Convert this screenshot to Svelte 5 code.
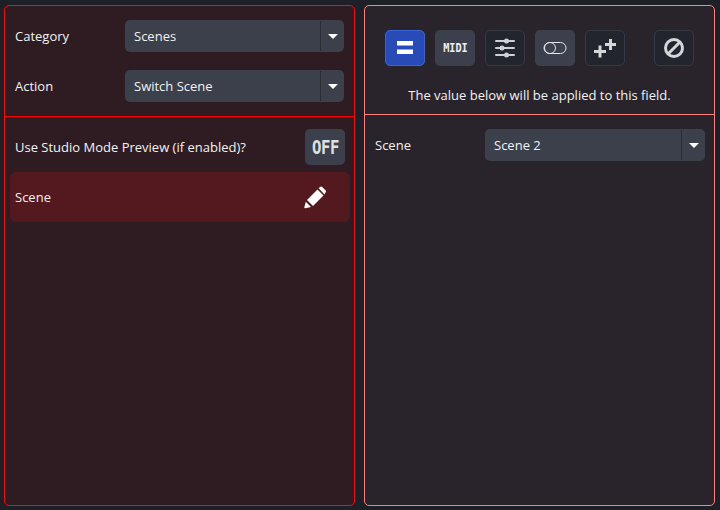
<script>
	let category = 'Scenes';
	let action = 'Switch Scene';
	let scene = 'Scene 2';
</script>

{#snippet dropdown(value)}
	<div class="dropdown">
		<span class="value">{value}</span>
		<span class="arrow"><i></i></span>
	</div>
{/snippet}

<div class="app">
	<section class="panel left">
		<div class="top">
			<div class="row">
				<span class="label">Category</span>
				{@render dropdown(category)}
			</div>
			<div class="row">
				<span class="label">Action</span>
				{@render dropdown(action)}
			</div>
		</div>
		<div class="fields">
			<div class="toggle-row">
				<span>Use Studio Mode Preview (if enabled)?</span>
				<button class="btn light off"><span>OFF</span></button>
			</div>
			<div class="scene-row">
				<span>Scene</span>
				<svg class="pencil" width="22" height="23" viewBox="0 0 22 23">
					<path fill="#fff" d="M13.500 3.500L19.500 9.500 9 20 3 14z" />
					<path fill="#fff" d="M14.700 2.300L16 1a1.600 1.600 0 0 1 2.200 0L21.500 4.300a1.600 1.600 0 0 1 0 2.200L20.500 8.500z" />
					<path fill="#fff" d="M1.800 15.800L7 21l-5.700 1.300a.9.9 0 0 1-1-1z" />
				</svg>
			</div>
		</div>
	</section>

	<section class="panel right">
		<div class="top-right">
			<div class="toolbar">
				<button class="btn blue" aria-label="Value">
					<svg width="18" height="14" viewBox="0 0 18 14"><path fill="#fff" d="M1 0h16v4.500H1zM1 8.500h16V13H1z" /></svg>
				</button>
				<button class="btn light midi"><span>MIDI</span></button>
				<button class="btn dark" aria-label="Sliders">
					<svg width="22" height="22" viewBox="0 0 22 22" fill="#cfd1d6">
						<rect x="1" y="3" width="20" height="2" rx="1" />
						<circle cx="12.500" cy="4" r="2.500" />
						<rect x="1" y="10" width="20" height="2" rx="1" />
						<circle cx="8" cy="11" r="2.500" />
						<rect x="1" y="17" width="20" height="2" rx="1" />
						<circle cx="12.500" cy="18" r="2.500" />
					</svg>
				</button>
				<button class="btn light" aria-label="Toggle">
					<svg width="24" height="14" viewBox="0 0 24 14" fill="none" stroke="#e4e5e8" stroke-width="1">
						<rect x="1" y="1.500" width="22" height="11" rx="5.500" />
						<circle cx="7" cy="7" r="5.500" />
					</svg>
				</button>
				<button class="btn dark" aria-label="Add">
					<svg width="26" height="24" viewBox="0 0 26 24" fill="#d4d6da">
						<path d="M6.500 9.500h3V14H14v3H9.500v4.500h-3V17H2v-3h4.500z" />
						<path d="M17 3h3v4h4v3h-4v4h-3v-4h-4V7h4z" />
					</svg>
				</button>
				<button class="btn dark ban" aria-label="None">
					<svg width="22" height="22" viewBox="0 0 22 22" fill="none" stroke="#d4d6da" stroke-width="3">
						<circle cx="11" cy="11" r="8.500" />
						<path d="M5 17L17 5" />
					</svg>
				</button>
			</div>
			<p class="hint">The value below will be applied to this field.</p>
		</div>
		<div class="fields">
			<div class="row">
				<span class="label">Scene</span>
				{@render dropdown(scene)}
			</div>
		</div>
	</section>
</div>

<style>
	:global(body) {
		background: #1d2027;
	}

	.app {
		display: flex;
		gap: 9px;
		box-sizing: border-box;
		width: 720px;
		height: 510px;
		padding: 5px 5px 4px 4px;
		font-family: "Open Sans", "Liberation Sans", sans-serif;
		font-size: 13px;
		color: #f2f2f2;
	}

	.panel {
		display: flex;
		flex-direction: column;
		flex: 1;
		box-sizing: border-box;
		border-radius: 5px;
	}

	.left {
		border: 1px solid #ee0f12;
		background: #2e1c22;
	}

	.right {
		border: 1px solid #ff8080;
		background: #29242b;
	}

	.top {
		display: flex;
		flex-direction: column;
		gap: 18px;
		padding: 14px 10px 14px 10px;
		border-bottom: 1px solid #ff0000;
	}

	.top-right {
		padding: 24px 0 10px;
		border-bottom: 1px solid #ff8080;
	}

	.row {
		display: flex;
		align-items: center;
		justify-content: space-between;
	}

	.label {
		width: 110px;
		flex-shrink: 0;
	}

	.dropdown {
		display: flex;
		flex: 1;
		height: 32px;
		border-radius: 5px;
		background: #3c404b;
	}

	.value {
		flex: 1;
		align-self: center;
		padding-left: 9px;
	}

	.arrow {
		display: flex;
		align-items: center;
		justify-content: center;
		width: 23px;
		margin: 1px 0;
		border-left: 1px solid #2a2c34;
	}

	.arrow i {
		width: 0;
		height: 0;
		border-left: 5px solid transparent;
		border-right: 5px solid transparent;
		border-top: 5px solid #fff;
	}

	.fields {
		display: flex;
		flex-direction: column;
		padding: 14px 9px 0 10px;
	}

	.left .fields {
		gap: 7px;
		padding: 12px 4px 0 5px;
	}

	.toggle-row {
		display: flex;
		align-items: center;
		justify-content: space-between;
		padding: 0 5px;
		height: 36px;
	}

	.scene-row {
		display: flex;
		align-items: center;
		justify-content: space-between;
		height: 50px;
		padding: 0 24px 0 5px;
		border-radius: 6px;
		background: #54181f;
	}

	.btn {
		display: flex;
		align-items: center;
		justify-content: center;
		box-sizing: border-box;
		width: 40px;
		height: 36px;
		padding: 0;
		border: 1px solid transparent;
		border-radius: 5px;
		font-family: inherit;
		color: #fff;
	}

	.blue {
		background: #284bb8;
		border-color: #3c62d4;
	}

	.light {
		background: #3c404d;
	}

	.dark {
		background: #23252e;
		border-color: #363944;
	}

	.off span {
		display: block;
		font-family: "DejaVu Sans Mono", monospace;
		font-size: 19px;
		font-weight: 700;
		letter-spacing: -0.5px;
		color: #dfe0e3;
		transform: scaleX(0.82);
	}

	.midi span {
		display: block;
		font-family: "DejaVu Sans Mono", monospace;
		font-size: 12px;
		font-weight: 700;
		color: #f0f0f0;
		transform: scaleX(0.85);
	}

	.toolbar {
		display: flex;
		gap: 10px;
		padding-left: 20px;
	}

	.ban {
		margin-left: 19px;
	}

	.hint {
		margin: 20px 0 0;
		text-align: center;
		line-height: 18px;
	}
</style>
